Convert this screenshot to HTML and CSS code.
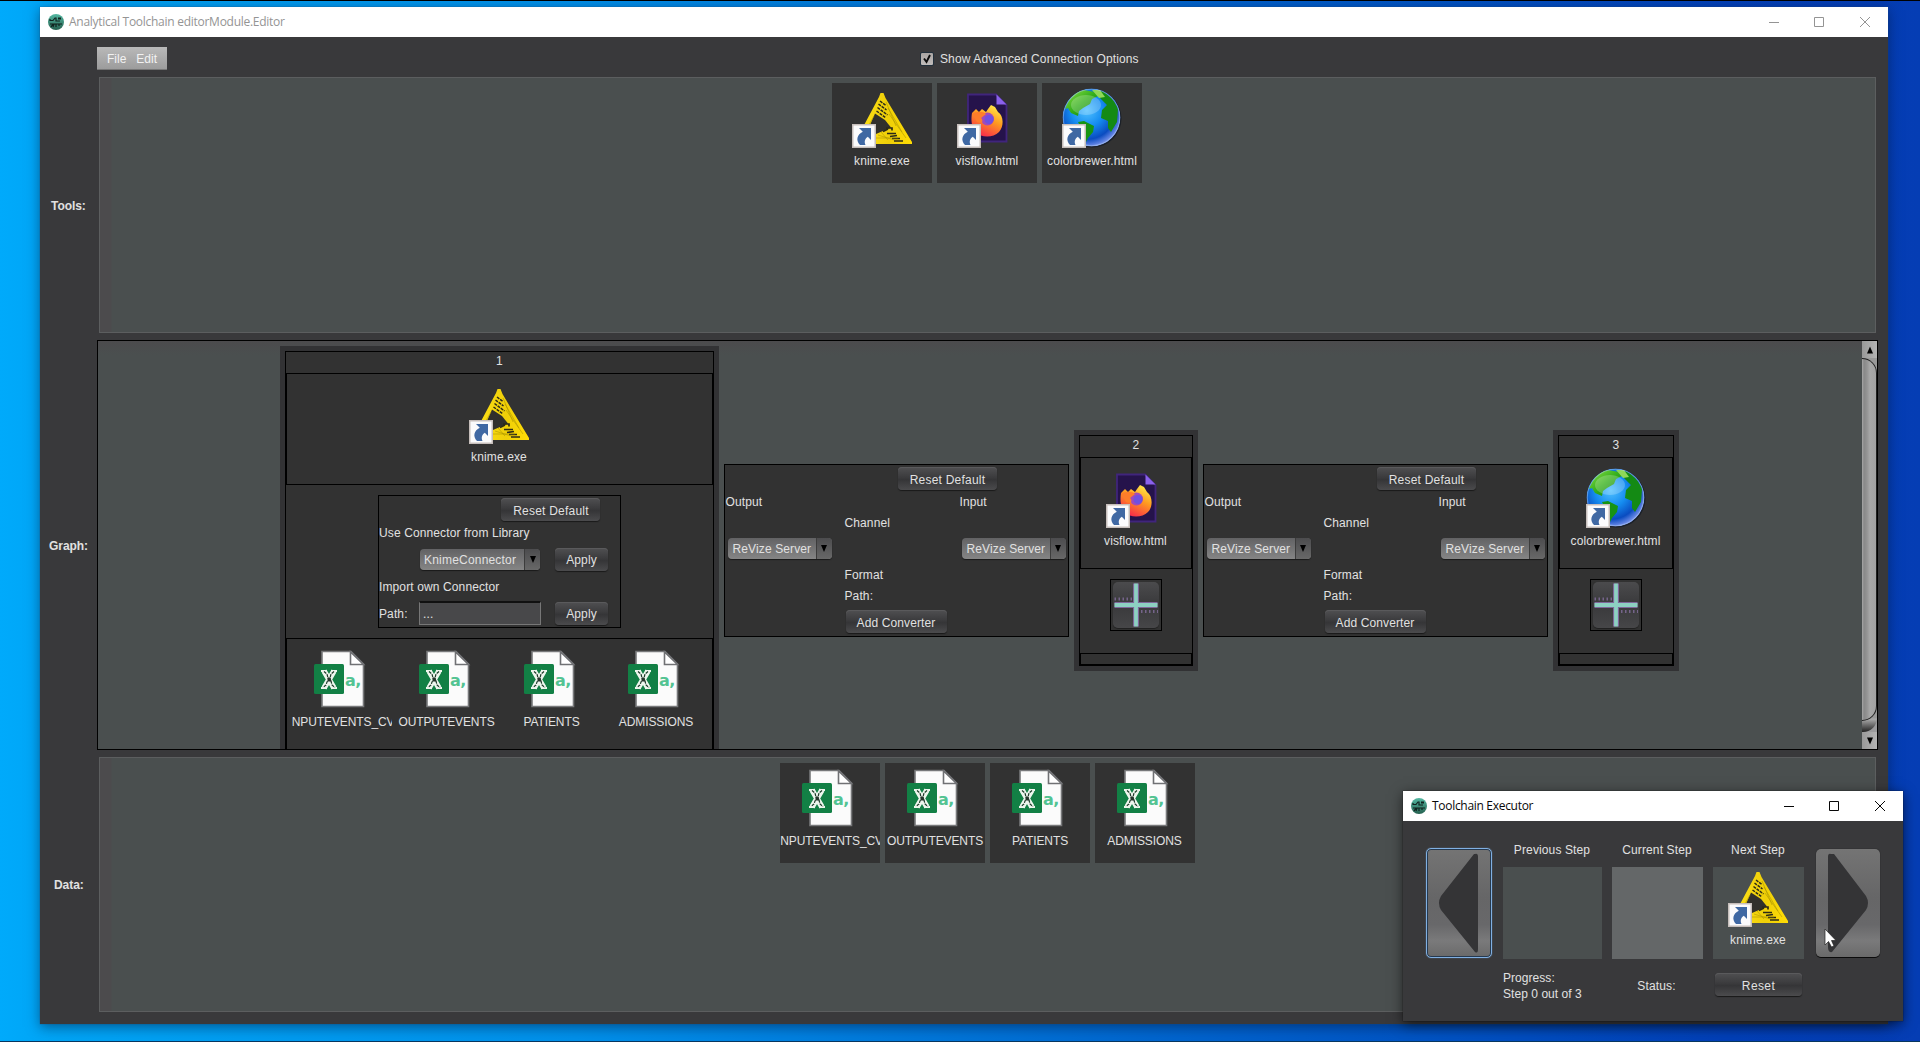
FILE: index.html
```html
<!DOCTYPE html>
<html lang="en">
<head>
<meta charset="utf-8">
<title>Analytical Toolchain Editor</title>
<link rel="stylesheet" href="styles.css">
</head>
<body>
<svg class="defs" width="0" height="0" aria-hidden="true">
  <defs>
    <linearGradient id="gold" x1="0" y1="0" x2="1" y2="0"><stop offset="0" stop-color="#ffe21a"/><stop offset=".6" stop-color="#efcf08"/><stop offset="1" stop-color="#ffdc05"/></linearGradient>
    <radialGradient id="sea" cx=".42" cy=".38" r=".62"><stop offset="0" stop-color="#4fc0ff"/><stop offset=".45" stop-color="#158cf0"/><stop offset=".8" stop-color="#0a4cc0"/><stop offset="1" stop-color="#6f8ce8"/></radialGradient>
    <linearGradient id="land" x1="0" y1="0" x2="1" y2="1"><stop offset="0" stop-color="#8fe048"/><stop offset=".5" stop-color="#35b01c"/><stop offset="1" stop-color="#087408"/></linearGradient>
    <linearGradient id="fire" x1=".8" y1="0" x2=".3" y2="1"><stop offset="0" stop-color="#fff04a"/><stop offset=".45" stop-color="#ff9a20"/><stop offset="1" stop-color="#f8254c"/></linearGradient>
    <linearGradient id="teal" x1="0" y1="0" x2="0" y2="1"><stop offset="0" stop-color="#54b8a2"/><stop offset="1" stop-color="#25604f"/></linearGradient>
    <clipPath id="globe-cut"><circle cx="29.500" cy="29.500" r="29"/></clipPath>
  </defs>
  <symbol id="link" viewBox="0 0 24 24">
    <rect width="24" height="24" fill="#c6bebb"/><rect x="1.500" y="1.500" width="21" height="21" fill="#fbfbfc"/>
    <path d="M7 4H19V16L15.800 12.800C13 14.500 12 17.500 13.500 21H8C3.500 16.500 5 10.500 10.800 7.800Z" fill="#3f68a3"/>
  </symbol>
  <symbol id="knime" viewBox="0 0 60 60">
    <path fill="url(#gold)" d="M28.500 5H31.500L33.500 10 60 54V56H2L27 9Z"/>
    <path d="M23 25.500 18 37 24 46 39 39.500 33 32Z" fill="#31302c"/>
    <g fill="none" stroke="#2c2a18" stroke-width="1.500">
      <path d="M28 13l6 4.500M26.500 16l8 6M25.500 19.500l10 7.500M24.500 23l9 6.500"  stroke-dasharray="3 .9"/>
      <path d="M34 40h6v2.500M31 43.500l5-2.500M35 45.500h9M38 48.500l7-1M40 50.500h8M42 53h9" stroke-width="1.700"/>
    </g>
    <g fill="none" stroke="#a58f00" stroke-width=".7" opacity=".75"><path d="M34 14 44 38M36 20 50 44M37 26 54 50M24 50H46M26 47 42 52M29 44 36 52M22 28 14 42"/></g>
    <use href="#link" x="0" y="36" width="24" height="24"/>
  </symbol>
  <symbol id="firefox" viewBox="0 0 60 60">
    <path d="M11 6.500H39L49.500 17V53.500H11Z" fill="#25134b" stroke="#40257c" stroke-width="1.800"/>
    <path d="M39.500 6.500V16.500H49.500Z" fill="#8b62ec"/>
    <path d="M15 25 19 21 22 24 25 21 29 24 31 21 34 17 38 19 41 24C47 28 47 39 42 44C36 50 24 50 19 44C14 39 14 31 15 25Z" fill="url(#fire)"/>
    <circle cx="30.500" cy="31" r="6.500" fill="#a04bb8"/><circle cx="32" cy="31.500" r="4.500" fill="#6f50e0"/>
    <path d="M15 26C20 23 26 23 29 26L24 30C27 33 25 36 20 34Z" fill="#ff7d2a"/>
    <use href="#link" x="0" y="36" width="24" height="24"/>
  </symbol>
  <symbol id="globe" viewBox="0 0 60 60">
    <circle cx="30.500" cy="30.500" r="29" fill="#1b2028"/>
    <g clip-path="url(#globe-cut)">
      <circle cx="29.500" cy="29.500" r="29" fill="url(#sea)"/>
      <path d="M3 21C6 12 12 4 22 2L33 4 36 8 30 11 28 16 21 20 17 23 16 28 9 25 6 20Z" fill="url(#land)"/>
      <path d="M16 34 22 33 32 38 31 44 26 50 24 54 20 42Z" fill="#179414"/>
      <path d="M39 3C47 6 53 13 56 21L55 34 49 44 46 40 46 33 39 30 40 22 45 17 38 10Z" fill="#148a14"/>
      <path d="M30 2 38 2 43 9 37 10Z" fill="#8fd858"/>
      <ellipse cx="24" cy="17" rx="15" ry="10" fill="#fff" opacity=".22"/>
      <circle cx="29.500" cy="29.500" r="28.300" fill="none" stroke="#b9d4f5" stroke-width="1.200" opacity=".45"/>
    </g>
    <use href="#link" x="0" y="36" width="24" height="24"/>
  </symbol>
  <symbol id="csv" viewBox="0 0 60 60">
    <path d="M10 2.500H39L51.500 15V57.500H10Z" fill="#fbfbfb" stroke="#77787a" stroke-width="1.600"/>
    <path d="M38.500 3V15.500H51.500Z" fill="#fff" stroke="#707174" stroke-width="1.600"/>
    <path d="M40.500 1.500H53V14Z" fill="#323232"/>
    <rect x="2" y="15" width="30" height="30" rx="1.500" fill="#128045"/>
    <path d="M12 22 22 39M22 22 12 39" stroke="#eef6ee" stroke-width="5.500"/>
    <path d="M9 22h6M19 22h6M9 39h6M19 39h6" stroke="#eef6ee" stroke-width="2.200"/>
    <path d="M12 22.500 15 25 16 29 19 32 20 36 23 38.500M22 22.500 19 25 18 29 15 33 14 36 11 38.500" fill="none" stroke="#1c3a28" stroke-width="1.200" stroke-dasharray="3 1"/>
    <path d="M15.500 28.500h3l1 4h-4z" fill="#26352c"/>
    <text x="33" y="37" class="csv-letter">a,</text>
  </symbol>
  <symbol id="plus" viewBox="0 0 46 46">
    <path d="M23 1.500V44.500M1.500 23H44.500" stroke="#80669a" stroke-width="6"/>
    <path d="M23 1.500V44.500M1.500 23H44.500" stroke="#8dd0c2" stroke-width="3.800"/>
    <path d="M1.500 17H19M28 29.500H45" stroke="#75648a" stroke-width="3" stroke-dasharray="1.500 2.500"/>
  </symbol>
  <symbol id="app" viewBox="0 0 16 16">
    <circle cx="8" cy="8" r="8" fill="url(#teal)"/>
    <path d="M2 7V5M2 6.500H5L7 4H8V7H12M2 10H5L3 13M6 10L5 13M6 10H14M8 10V13M11 10V12" fill="none" stroke="#10231f" stroke-width="1.200"/>
    <path d="M10 3.500h3v2h-3z" fill="#10231f"/>
  </symbol>
  <symbol id="minimize" viewBox="0 0 10 10"><path d="M0 5.500H10" stroke="currentColor"/></symbol>
  <symbol id="maximize" viewBox="0 0 10 10"><path d="M.5.500H9.500V9.500H.5Z" fill="none" stroke="currentColor"/></symbol>
  <symbol id="close" viewBox="0 0 10 10"><path d="M0 0 10 10M10 0 0 10" fill="none" stroke="currentColor"/></symbol>
</svg>

<main class="window editor">
  <header class="titlebar inactive">
    <svg class="app-icon"><use href="#app"/></svg>
    <span class="window-title">Analytical Toolchain editorModule.Editor</span>
    <svg class="control"><use href="#minimize"/></svg><svg class="control"><use href="#maximize"/></svg><svg class="control"><use href="#close"/></svg>
  </header>
  <div class="toolbar">
    <nav class="menu"><span>File</span><span>Edit</span></nav>
    <label class="advanced"><span class="check"><svg viewBox="0 0 14 14" width="14" height="14"><path d="M4 6.500 6.500 10 10 3" fill="none" stroke="#0c0c0c" stroke-width="1.900"/></svg></span>Show Advanced Connection Options</label>
  </div>

  <section class="row tools">
    <h2>Tools:</h2>
    <div class="shelf">
      <div class="item"><svg class="icon"><use href="#knime"/></svg><span>knime.exe</span></div>
      <div class="item"><svg class="icon"><use href="#firefox"/></svg><span>visflow.html</span></div>
      <div class="item"><svg class="icon"><use href="#globe"/></svg><span>colorbrewer.html</span></div>
    </div>
  </section>

  <section class="row graph">
    <h2>Graph:</h2>
    <div class="scrollpane">
      <div class="chain">
        <article class="node first">
          <div class="node-body">
            <div class="number">1</div>
            <div class="slot"><div class="item"><svg class="icon"><use href="#knime"/></svg><span>knime.exe</span></div></div>
            <div class="middle">
              <div class="library">
                <button class="btn reset">Reset Default</button>
                <div class="caption">Use Connector from Library</div>
                <div class="line"><span class="path"></span><div class="combo"><span>KnimeConnector</span><i></i></div><button class="btn apply">Apply</button></div>
                <div class="caption second">Import own Connector</div>
                <div class="line last"><span class="path">Path:</span><div class="field">...</div><button class="btn apply">Apply</button></div>
              </div>
            </div>
            <div class="slot files">
              <div class="item"><svg class="icon"><use href="#csv"/></svg><span>INPUTEVENTS_CV</span></div>
              <div class="item"><svg class="icon"><use href="#csv"/></svg><span>OUTPUTEVENTS</span></div>
              <div class="item"><svg class="icon"><use href="#csv"/></svg><span>PATIENTS</span></div>
              <div class="item shifted"><svg class="icon"><use href="#csv"/></svg><span>ADMISSIONS</span></div>
            </div>
          </div>
        </article>

        <div class="connection">
          <button class="btn reset">Reset Default</button>
          <span class="output">Output</span><span class="input">Input</span>
          <span class="mid channel">Channel</span>
          <div class="combo from"><span>ReVize Server</span><i></i></div>
          <div class="combo to"><span>ReVize Server</span><i></i></div>
          <span class="mid format">Format</span>
          <span class="mid route">Path:</span>
          <button class="btn converter">Add Converter</button>
        </div>

        <article class="node second-node">
          <div class="node-body">
            <div class="number">2</div>
            <div class="slot"><div class="item"><svg class="icon"><use href="#firefox"/></svg><span>visflow.html</span></div></div>
            <div class="middle"><div class="add"><svg><use href="#plus"/></svg></div></div>
            <div class="slot empty"></div>
          </div>
        </article>

        <div class="connection">
          <button class="btn reset">Reset Default</button>
          <span class="output">Output</span><span class="input">Input</span>
          <span class="mid channel">Channel</span>
          <div class="combo from"><span>ReVize Server</span><i></i></div>
          <div class="combo to"><span>ReVize Server</span><i></i></div>
          <span class="mid format">Format</span>
          <span class="mid route">Path:</span>
          <button class="btn converter">Add Converter</button>
        </div>

        <article class="node third-node">
          <div class="node-body">
            <div class="number">3</div>
            <div class="slot"><div class="item"><svg class="icon"><use href="#globe"/></svg><span>colorbrewer.html</span></div></div>
            <div class="middle"><div class="add"><svg><use href="#plus"/></svg></div></div>
            <div class="slot empty"></div>
          </div>
        </article>
      </div>
      <div class="scrollbar">
        <div class="arrow"><svg viewBox="0 0 8 8" width="8" height="8"><path d="M4 .5 7 7.500H1Z"/></svg></div>
        <div class="track"><div class="thumb"></div></div>
        <div class="arrow"><svg viewBox="0 0 8 8" width="8" height="8"><path d="M4 7.500 7 .5H1Z"/></svg></div>
      </div>
    </div>
  </section>

  <section class="row data">
    <h2>Data:</h2>
    <div class="shelf">
      <div class="item"><svg class="icon"><use href="#csv"/></svg><span>INPUTEVENTS_CV</span></div>
      <div class="item"><svg class="icon"><use href="#csv"/></svg><span>OUTPUTEVENTS</span></div>
      <div class="item"><svg class="icon"><use href="#csv"/></svg><span>PATIENTS</span></div>
      <div class="item shifted"><svg class="icon"><use href="#csv"/></svg><span>ADMISSIONS</span></div>
    </div>
  </section>
</main>

<aside class="window executor">
  <header class="titlebar">
    <svg class="app-icon"><use href="#app"/></svg>
    <span class="window-title">Toolchain Executor</span>
    <svg class="control"><use href="#minimize"/></svg><svg class="control"><use href="#maximize"/></svg><svg class="control"><use href="#close"/></svg>
  </header>
  <div class="stepper">
    <button class="step-btn previous"><svg viewBox="0 0 64 108" width="64" height="108"><path d="M48 5Q51 4 51 8V100Q51 105 48 103L14 61Q10 54 14 47L47 5Z" fill="#343436"/></svg></button>
    <div class="step prev"><h3>Previous Step</h3><div class="stage"></div><p class="progress">Progress:<br>Step 0 out of 3</p></div>
    <div class="step"><h3>Current Step</h3><div class="stage current"></div><p>Status:</p></div>
    <div class="step"><h3>Next Step</h3><div class="stage"><div class="item"><svg class="icon"><use href="#knime"/></svg><span>knime.exe</span></div></div><button class="btn restart">Reset</button></div>
    <button class="step-btn following"><svg viewBox="0 0 64 108" width="64" height="108"><path d="M15 5Q12 4 12 8V98Q12 104 16 103L50 61Q54 54 50 47L18 5Z" fill="#343436"/></svg></button>
  </div>
</aside>
<svg class="pointer" viewBox="0 0 13 20" width="13" height="20"><path d="M1 1V17L4.500 13.500 7.500 19 10 18 7.500 12.500H12Z" fill="#fff" stroke="#222" stroke-width=".7"/></svg>
</body>
</html>
```

FILE: styles.css
```css
* { box-sizing: border-box; }
body {
  margin: 0; width: 1920px; height: 1042px; overflow: hidden; position: relative;
  font: 12px/16px "Liberation Sans", Arial, sans-serif; letter-spacing: .12px; color: #e1e1e1;
  background: linear-gradient(90deg, #00aafb 0, #00a4f5 3%, #0090ea 30%, #0066cf 60%, #0340b8 90%, #053db4 100%);
  border-top: 1px solid #000; border-bottom: 1px solid #07365f;
}
.defs { position: absolute; }
h2, h3, p { margin: 0; font-size: 12px; }
h3, p { font-weight: normal; }
button { font: inherit; letter-spacing: inherit; color: inherit; padding: 0; }
svg { display: block; flex: none; }

/* windows */
.window { position: absolute; background: #39393b; }
.editor { left: 40px; top: 6px; width: 1848px; height: 1017px; box-shadow: 0 0 1px #234d78, 0 3px 12px rgba(0, 20, 50, .5); }
.executor { left: 1403px; top: 790px; width: 500px; height: 230px; box-shadow: 0 0 1px #111, 0 3px 12px rgba(0, 0, 0, .6); }
.titlebar {
  height: 30px; padding: 0 18px 0 8px; display: flex; align-items: center;
  background: #fff; color: #080808; font: 12px/16px "Open Sans", "Noto Sans", sans-serif; letter-spacing: -.27px;
}
.executor .titlebar { letter-spacing: -.3px; }
.executor .control { margin-top: -1px; }
.titlebar.inactive { color: #949494; }
.app-icon { width: 16px; height: 16px; margin: -1px 5px 0 0; }
.window-title { flex: 1; }
.control { width: 10px; height: 10px; margin-left: 36px; }
.control:nth-of-type(3) { margin-left: 35px; }

.toolbar { height: 40px; padding: 10px 0 0 57px; display: flex; align-items: flex-start; }
.menu {
  width: 70px; height: 23px; padding: 1px 0 0 10px; display: flex; align-items: center; gap: 10px; letter-spacing: 0;
  background: linear-gradient(#b9b9b9, #9c9c9c); border-bottom: 1px solid #777; color: #f2f2f2;
}
.advanced { margin: 4px 0 0 753px; display: flex; align-items: center; gap: 6px; letter-spacing: .12px; }
.check { width: 14px; height: 14px; margin-top: -1px; background: linear-gradient(#aaa5a3, #c0bcba); border: 1px solid #22303c; border-radius: 2px; display: flex; align-items: center; justify-content: center; }

/* rows */
.row { display: flex; align-items: center; }
.row h2 { width: 59px; padding: 2px 0 0 11px; letter-spacing: -.05px; }
.shelf {
  width: 1777px; height: 100%; border: 1px solid #5c5e5f; padding-top: 5px; display: flex; justify-content: center; gap: 5px;
  background: linear-gradient(90deg, #4c4b4d 11px, #4a4f4f 12px);
}
.tools { height: 256px; }
.tools .shelf { padding-right: 1px; }
.data { height: 255px; margin-top: 7px; }
.row.data h2 { padding: 1px 0 0 14px; }
.graph { height: 410px; margin-top: 7px; }
.row.graph h2 { width: 57px; padding-left: 9px; }
.scrollpane { width: 1781px; height: 410px; border: 1px solid #000; display: flex; overflow: hidden; background: linear-gradient(#4c4b4d, #4a4f4f 14px); }
.chain { flex: 1; height: 419px; padding-right: 2px; display: flex; align-items: center; justify-content: center; gap: 5px; }

.item { width: 100px; height: 100px; padding-top: 5px; background: #323232; overflow: hidden; display: flex; flex-direction: column; align-items: center; }
.item .icon { width: 60px; height: 60px; }
.item span { margin-top: 5px; white-space: nowrap; }
.files span, .data .item span { letter-spacing: -.1px; }
.shifted .icon, .shifted span { margin-left: -1px; }
.csv-letter { font: bold 16px "DejaVu Sans", sans-serif; fill: #53c392; letter-spacing: -.5px; }

.node { background: #323234; padding: 5px; }
.node-body { height: 100%; border: 1px solid #000; background: #323232; }
.first { width: 439px; height: 409px; }
.second-node { width: 124px; height: 241px; }
.third-node { width: 126px; height: 241px; }
.second-node .node-body, .third-node .node-body { border-bottom-width: 2px; }
.number { height: 21px; padding: 1px 0 0 1px; text-align: center; }
.slot { height: 112px; border: 1px solid #000; padding-top: 5px; display: flex; justify-content: center; gap: 5px; }
.slot.empty { height: 12px; padding: 0; }
.middle { height: 84px; padding-top: 10px; display: flex; justify-content: center; align-items: flex-start; }
.first .middle { height: 153px; }
.first .slot.files { height: 113px; }
.add { width: 52px; height: 52px; border: 1px solid #000; padding: 2px; }
.add svg { width: 46px; height: 46px; border-radius: 5px; background: linear-gradient(#4b4b4d, #39393b 50%, #464648); box-shadow: 0 1px 1px #202020; }

/* controls */
.btn {
  height: 23px; border: 0; border-radius: 4px; display: flex; align-items: center; justify-content: center; padding-top: 2px;
  background: linear-gradient(#505052, #3b3b3d 45%, #353537 55%, #4b4b4d); box-shadow: 0 1px 1px #191919, inset 0 1px 0 #5a5a5c;
}
.reset { width: 99px; letter-spacing: .22px; padding-left: 1px; }
.apply { width: 53px; }
.combo { height: 21px; display: flex; border-radius: 4px; overflow: hidden; background: linear-gradient(#626264, #858585); box-shadow: 0 1px 1px #191919; }
.combo span { flex: 1; padding: 3px 0 0 5px; white-space: nowrap; }
.combo i { width: 16px; background: linear-gradient(#4c4c4e, #686868); border-left: 1px solid #3c3c3c; display: flex; align-items: center; justify-content: center; }
.combo i::after { content: ""; border: 3.5px solid transparent; border-top: 7px solid #000; border-bottom: 0; }

.library { width: 243px; height: 133px; margin-left: 1px; border: 1px solid #000; padding-top: 2px; }
.library .reset { margin-left: 122px; }
.caption { height: 26px; padding-top: 4px; }
.caption.second { height: 30px; padding-top: 8px; }
.line { height: 24px; display: flex; align-items: center; }
.line .combo { width: 120px; margin: 0 15px 0 1px; }
.line .combo span { letter-spacing: .2px; padding-left: 4px; }
.line .field { width: 122px; height: 24px; margin-right: 14px; border: 1px solid #777; border-top: 2px solid #111; background: #48484a; padding: 3px 0 0 3px; }
.path { width: 40px; padding-top: 1px; }

.connection {
  width: 345px; height: 173px; border: 1px solid #000; background: #323232; padding-top: 2px;
  display: grid; grid-template-columns: 119px 115px 109px; grid-template-rows: 23px 23px 19px 33px 20px 22px 1fr;
}
.connection > span { align-self: center; padding-left: 1px; }
.connection .reset { grid-column: 1 / -1; margin-left: 173px; }
.output { grid-area: 2 / 1; }
.input { grid-area: 2 / 3; }
.mid { grid-column: 2; }
.channel { grid-row: 3; }
.from { grid-area: 4 / 1; width: 104px; margin-left: 3px; }
.to { grid-area: 4 / 3; width: 104px; margin-left: 3px; }
.connection .combo { align-self: center; }
.format { grid-row: 5; }
.route { grid-row: 6; }
.converter { grid-area: 7 / 2; width: 101px; margin-left: 2px; align-self: start; margin-top: 3px; }

.scrollbar { width: 15px; display: flex; flex-direction: column; background: #9b9b9d; }
.arrow { height: 17px; display: flex; align-items: center; justify-content: center; background: linear-gradient(90deg, #999, #b4b4b4); }
.track { flex: 1; background: linear-gradient(#999 0, #999 360px, #aaa 361px, #222 100%); border-bottom-right-radius: 14px; overflow: hidden; }
.thumb { height: 363px; border: solid #202020; border-width: 1px 1px 1px 0; border-radius: 0 15px 15px 0; background: linear-gradient(90deg, #a8a8a8 0, #888 2px, #949494 5px, #a8a8a8 8px, #a2a2a2); }

/* executor */
.stepper { display: flex; padding: 26px 0 0 23px; }
.step-btn { width: 64px; height: 108px; border: 0; border-radius: 5px; background: linear-gradient(#747474 0, #666667 45%, #68686a 70%, #7a7a7b 85%, #6a6a6a 100%); }
.previous { width: 66px; height: 110px; margin-top: 1px; border: 1px solid #80b0e2; box-shadow: inset 0 0 0 1px #26394f, 0 0 1px #80b0e2; margin-right: 11px; }
.following { margin: 2px 0 0 12px; box-shadow: 0 1px 0 #0b0b0b, 0 0 1px #111; }
.step { width: 91px; margin-right: 10px; display: flex; flex-direction: column; align-items: center; }
.step:nth-of-type(3) { margin-right: 0; }
.step.prev { width: 99px; }
.step h3 { height: 20px; line-height: 6px; padding-right: 1px; letter-spacing: .12px; }
.stage { width: 100%; height: 92px; background: #4a4f4f; }
.stage.current { background: #646768; }
.stage .item { width: 90px; padding: 0; background: none; height: 92px; }
.step p { margin: 19px 2px 0 0; letter-spacing: .15px; }
.step .progress { align-self: flex-start; margin-top: 11px; white-space: nowrap; letter-spacing: .05px; }
.restart { width: 87px; margin-top: 14px; letter-spacing: .4px; }
.pointer { position: absolute; left: 1824px; top: 927px; }
```
